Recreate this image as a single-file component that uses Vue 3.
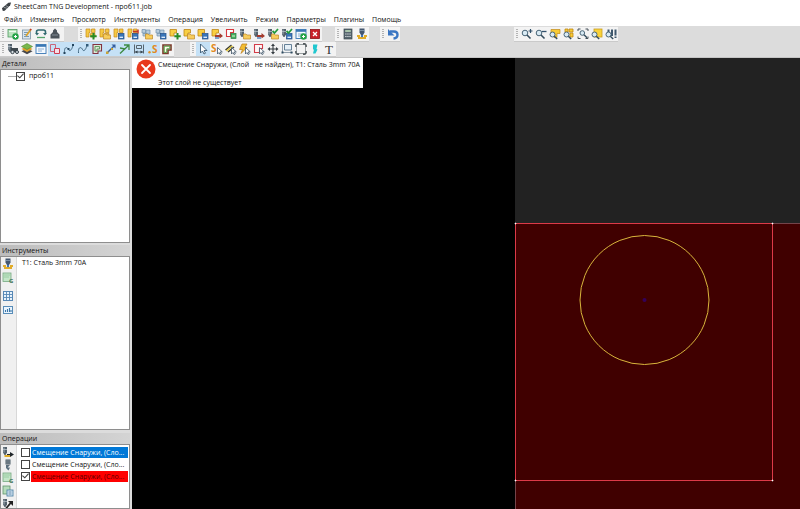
<script setup>
import { ref } from 'vue'

const menu = ['Файл', 'Изменить', 'Просмотр', 'Инструменты', 'Операция', 'Увеличить', 'Режим', 'Параметры', 'Плагины', 'Помощь']

const t = (label, ...parts) => ({ label, parts })
const on = (label, ...parts) => ({ label, parts, active: true })
const lettered = (tool, letter) => ({ ...tool, letter })

const startMark = { ch: 'S', x: 6, y: 11, cls: 's-letter' }
const startEdit = { ch: 'S', x: 1, y: 10, cls: 's-letter' }
const textMark = { ch: 'T', x: 3, y: 12, cls: 't-letter' }
const codeMark = { ch: 'G', x: 8, y: 12, cls: 'g-letter' }

const topBars = [
  { id: 'file', tools: [
    t('Новая работа', 'sheet-green', 'b-go'), t('Параметры работы', 'sheet-edit'),
    t('Загрузить', 'arch'), t('Постпроцессор', 'post')] },
  { id: 'nesting', tools: [
    t('Новая деталь', 'nest', 'b-plus'), t('Открыть деталь', 'nest', 'b-folder'),
    t('Сохранить деталь', 'nest', 'b-save'), t('Сохранить как', 'nest', 'b-save', 'b-red'),
    t('Открыть чертёж', 'nest-pale', 'b-folder'), t('Сохранить чертёж', 'nest-pale', 'b-save'),
    t('Добавить', 'block', 'b-plus'), t('Открыть', 'block', 'b-folder'),
    t('Сохранить', 'block', 'b-save'), t('Импорт', 'block', 'b-arrow'),
    t('Контур', 'outline-red', 'b-green'), t('Открыть инструменты', 'torch', 'b-folder'),
    t('Сохранить инструменты', 'torch', 'b-arrow'), t('Проверить инструменты', 'torch', 'b-folder', 'tick'),
    t('Применить', 'torch', 'b-save', 'tick'), t('Окно', 'window', 'b-go'), t('Закрыть', 'close')] },
  { id: 'calc', tools: [t('Калькулятор', 'calc'), t('Резак', 'torch-base')] },
  { id: 'undo', tools: [t('Отменить', 'undo')] },
  { id: 'zoom', tools: [
    t('Приблизить', 'lens', 'z-plus'), t('Отдалить', 'lens', 'z-minus'),
    t('Показать деталь', 'z-part', 'lens-low'), t('Показать все', 'z-grid', 'lens-low'),
    t('Показать область', 'z-frame', 'lens-mid'), t('Показать лист', 'z-sheet', 'lens-low'),
    t('Показать станок', 'z-torch', 'lens-low')] }
]

const lowBars = [
  { id: 'view', tools: [
    t('Показать инструмент', 'torch', 'binoc'), t('Слои', 'layers'), t('Окно', 'window'),
    on('Контуры', 'outlines'), on('Траектория', 'path', 'path-dots'), on('Сегменты', 'path', 'path-end'),
    on('Деталь', 'part-cut'), on('Начало', 'arrow-blue'), on('Направление', 'arrow-green'),
    on('Ширина', 'dims'), lettered(on('Старт', 'dot'), startMark), t('Заливка', 'thick')] },
  { id: 'edit', tools: [
    on('Выбор', 'cursor'), lettered(t('Начальная точка', 'cursor-low'), startEdit), t('Перемычки', 'hatch', 'cursor-low'),
    t('Быстрый выбор', 'bolt', 'cursor-low'), t('Контур', 'outline-big', 'cursor-low'), t('Переместить', 'move'),
    t('Масштаб', 'scale'), t('Поворот', 'rotate'), t('Резка', 'cyan'), lettered(t('Текст'), textMark)] }
]

const instrTools = [t('Резак', 'torch-base'), lettered(t('Новый инструмент', 'sheet'), codeMark), t('Таблица', 'table'), t('Свойства', 'card')]
const opTools = [t('Плазма', 'torch', 'b-go-yellow'), t('Сверление', 'drill'), lettered(t('Новая операция', 'sheet'), codeMark), t('Код', 'sheet-copy'), t('Переместить', 'torch', 'arrow-up')]

const partShown = ref(true)
const operations = ref([
  { name: 'Смещение Снаружи, (Сло...', checked: false, kind: 'selected' },
  { name: 'Смещение Снаружи, (Сло...', checked: false, kind: 'plain' },
  { name: 'Смещение Снаружи, (Сло...', checked: true, kind: 'error' }
])
</script>

<template>
  <div class="app">
    <svg class="defs" aria-hidden="true">
      <symbol id="sheet-green" viewBox="0 0 14 14"><rect x="2" y="2.500" width="9" height="7.500" fill="#b9e3bd" stroke="#4f9a62" stroke-width=".8"/><path d="M3 4.500h7" stroke="#eefaf0"/></symbol>
      <symbol id="b-go" viewBox="0 0 14 14"><circle cx="9.500" cy="9.500" r="3.200" fill="#24a347"/><path d="M8 9.500h3M9.500 8v3" stroke="#fff" stroke-width="1"/></symbol>
      <symbol id="sheet-edit" viewBox="0 0 14 14"><rect x="2.500" y="3" width="8" height="9" fill="#d7e4ee" stroke="#7d95a6" stroke-width=".8"/><path d="M4 5.500h4M4 7.500h3M4 9.500h5" stroke="#4f7898" stroke-width=".7"/><path d="M6 9l4.500-6" stroke="#dda32b" stroke-width="1.700"/><path d="M10.200 3.300l1-1.300" stroke="#be3b25" stroke-width="1.800"/></symbol>
      <symbol id="arch" viewBox="0 0 14 14"><path d="M2.500 6V5q0-2 2-2h5q2 0 2 2v1" fill="none" stroke="#326a70" stroke-width="1.600"/><path d="M1 6h4L3 8.500zM9 6h4l-2 2.500z" fill="#326a70"/><path d="M3 10.500h8" stroke="#55a46b" stroke-width="1.300"/></symbol>
      <symbol id="post" viewBox="0 0 14 14"><path d="M5 3.500L7 1.500l2 2V5l2.500 2.500v4h-9v-4L5 5z" fill="#4b535a"/><path d="M4 8h6" stroke="#8f9aa3" stroke-width=".8"/></symbol>
      <symbol id="nest" viewBox="0 0 14 14"><path d="M2 2h4v3.500H5V10H2zM7.500 2H11v3.500H7.500zM6.500 6.500H11V10H6.500z" fill="#f6c944" stroke="#c48a1c" stroke-width=".7"/></symbol>
      <symbol id="nest-pale" viewBox="0 0 14 14"><path d="M2 2.500h3.500V6H2zM6 3h4v4H6zM3 6.500h4v2.500H3z" fill="#b7ccde" stroke="#7091ad" stroke-width=".7"/></symbol>
      <symbol id="block" viewBox="0 0 14 14"><path d="M2 2.500h6.500v3.500H6v3H2z" fill="#f8cf43" stroke="#bc8516" stroke-width=".8"/></symbol>
      <symbol id="b-plus" viewBox="0 0 14 14"><path d="M9.500 6v6.500M6.300 9.200h6.400" stroke="#278b24" stroke-width="2"/></symbol>
      <symbol id="b-folder" viewBox="0 0 14 14"><path d="M5.500 7H8l1 1h3.500v4h-7z" fill="#f7cd5d" stroke="#bd8629" stroke-width=".7"/></symbol>
      <symbol id="b-save" viewBox="0 0 14 14"><rect x="6.500" y="6.500" width="5.500" height="5.500" fill="#3975b9" stroke="#24518b" stroke-width=".7"/><path d="M7.500 10.300h3.500" stroke="#e6f2ff" stroke-width="1.300"/></symbol>
      <symbol id="b-red" viewBox="0 0 14 14"><path d="M7 4.500h5M12 2.500v4" stroke="#c43723" stroke-width="1.500"/></symbol>
      <symbol id="b-arrow" viewBox="0 0 14 14"><path d="M5 8h4.500V6l3.500 3-3.500 2.500V10H5z" fill="#a33b2e"/><path d="M5 11h4" stroke="#3975b9" stroke-width="1.300"/></symbol>
      <symbol id="outline-red" viewBox="0 0 14 14"><path d="M2.500 2.500h7v3h-3v4h-4z" fill="#fff" stroke="#d63a3f" stroke-width="1.100"/></symbol>
      <symbol id="b-green" viewBox="0 0 14 14"><rect x="7" y="6.500" width="5" height="5" fill="#49af60" stroke="#257e43" stroke-width=".7"/><path d="M8 9h3" stroke="#d6f5cf"/></symbol>
      <symbol id="torch" viewBox="0 0 14 14"><path d="M2 2h4v5.500L4.500 10h-1L2 7.500z" fill="#53616c"/><path d="M3 2.500v5M2 4.500h4" stroke="#b6c1c9" stroke-width=".8"/></symbol>
      <symbol id="tick" viewBox="0 0 14 14"><path d="M6.500 4l2 2L12 2" fill="none" stroke="#259a3d" stroke-width="1.800"/></symbol>
      <symbol id="window" viewBox="0 0 14 14"><rect x="2" y="2.500" width="10" height="9" fill="#f3f9ff" stroke="#3977b4" stroke-width=".9"/><path d="M2 3.800h10" stroke="#3977b4" stroke-width="2"/><path d="M4 7h6M4 9h4" stroke="#719dc5" stroke-width=".8"/></symbol>
      <symbol id="close" viewBox="0 0 14 14"><rect x="2.500" y="2.500" width="9" height="9" fill="#c91f28" stroke="#8c1218" stroke-width=".8"/><path d="M5 5l4 4M9 5L5 9" stroke="#fff" stroke-width="1.300"/></symbol>
      <symbol id="calc" viewBox="0 0 14 14"><rect x="3" y="2" width="8" height="10" fill="#586770" stroke="#3c4a52" stroke-width=".7"/><path d="M4.200 4h5.600" stroke="#b9d6b7" stroke-width="1.700"/><path d="M4.200 7h5.600M4.200 9.500h5.600" stroke="#d9dfe3" stroke-width="1.100" stroke-dasharray="1.300 .8"/></symbol>
      <symbol id="torch-base" viewBox="0 0 14 14"><path d="M4.500 1.500h5v4L8 8H6L4.500 5.500z" fill="#43566f"/><path d="M4.500 3.500h5" stroke="#95a9be" stroke-width=".7"/><path d="M2 9h3M9 9h3M3 11h8" stroke="#e1ac29" stroke-width="1.800"/><circle cx="7" cy="9" r="1.200" fill="#3b72b8"/></symbol>
      <symbol id="undo" viewBox="0 0 14 14"><path d="M4 4.500h4q3.500 0 3.500 3.300T7.500 11.500" fill="none" stroke="#3a76c3" stroke-width="2.400"/><path d="M2 2v6.500h6.500z" fill="#3a76c3"/></symbol>
      <symbol id="lens" viewBox="0 0 14 14"><circle cx="5" cy="6" r="2.800" fill="#d8eaf4" stroke="#4a6678"/><path d="M7 8l3.500 3.500" stroke="#344d5e" stroke-width="1.600"/></symbol>
      <symbol id="lens-low" viewBox="0 0 14 14"><circle cx="4.500" cy="7.500" r="2.500" fill="#d8eaf4" stroke="#4a6678"/><path d="M6.300 9.300l2.900 2.700" stroke="#344d5e" stroke-width="1.500"/></symbol>
      <symbol id="lens-mid" viewBox="0 0 14 14"><circle cx="6.300" cy="6" r="2.300" fill="#d8eaf4" stroke="#4a6678"/><path d="M8 7.700l3 3" stroke="#344d5e" stroke-width="1.400"/></symbol>
      <symbol id="z-plus" viewBox="0 0 14 14"><path d="M10.500 2v4M8.500 4h4" stroke="#31516c" stroke-width="1.200"/></symbol>
      <symbol id="z-minus" viewBox="0 0 14 14"><path d="M8 4.500h4.500" stroke="#31516c" stroke-width="1.300"/></symbol>
      <symbol id="z-part" viewBox="0 0 14 14"><path d="M3 2.500h9v4H9v4H6V6H3z" fill="#f8cb35" stroke="#c18a18" stroke-width=".7"/></symbol>
      <symbol id="z-grid" viewBox="0 0 14 14"><path d="M3 2h3v3H3zM7 2h4v3H7zM8 6h3v4H8z" fill="#f8cb35" stroke="#bd8513" stroke-width=".8"/></symbol>
      <symbol id="z-frame" viewBox="0 0 14 14"><path d="M2 4V2h2.500M9.500 2H12v2M12 9.500v2H9.500M4.500 11.500H2v-2" fill="none" stroke="#465159"/></symbol>
      <symbol id="z-sheet" viewBox="0 0 14 14"><rect x="4" y="2" width="8" height="8" fill="#f9d239" stroke="#c79d22" stroke-width=".8"/></symbol>
      <symbol id="z-torch" viewBox="0 0 14 14"><path d="M3.500 2.500h2v4h-2zM7 2.500h2V9H7zM10.500 2.500h2v6h-2zM10.500 9.500h2V11h-2z" fill="#3e576c"/></symbol>
      <symbol id="binoc" viewBox="0 0 14 14"><path d="M5 6h7v4H5z" fill="#3f484e"/><circle cx="6.500" cy="10" r="1.700" fill="#d6dee2" stroke="#333f47"/><circle cx="11" cy="10" r="1.500" fill="#d6dee2" stroke="#333f47"/></symbol>
      <symbol id="layers" viewBox="0 0 14 14"><path d="M1.500 9.300L7 6.500l5.500 2.800L7 12.300z" fill="#46474b"/><path d="M1.500 6.900L7 4l5.500 2.900L7 9.900z" fill="#e1a12d"/><path d="M1.500 4.500L7 1.500l5.500 3L7 7.500z" fill="#79b84b" stroke="#4c8a31" stroke-width=".6"/></symbol>
      <symbol id="outlines" viewBox="0 0 14 14"><path d="M2.500 2.500h5v7h-5z" fill="none" stroke="#c9667b"/><path d="M6.500 6.500h5v5h-5z" fill="#f6dfe7" stroke="#cf3d51"/></symbol>
      <symbol id="path" viewBox="0 0 14 14"><path d="M2.500 11c-.5-7 3-6 4-3.500S10 8 11 3" fill="none" stroke="#40667f" stroke-width="1"/></symbol>
      <symbol id="path-dots" viewBox="0 0 14 14"><path d="M1.500 10h2v2h-2zM5.500 6h2v2h-2zM10 2h2v2h-2z" fill="#24445c"/></symbol>
      <symbol id="path-end" viewBox="0 0 14 14"><path d="M10 2h2.500v2.500H10z" fill="#315a78"/></symbol>
      <symbol id="part-cut" viewBox="0 0 14 14"><path d="M3 2.500h8.500V9H8v2.500H3z" fill="#dce8d5" stroke="#833341" stroke-width="1.100"/><path d="M5 4.500h4.500v2.500H7v2H5z" fill="none" stroke="#569256" stroke-width=".9"/></symbol>
      <symbol id="arrow-blue" viewBox="0 0 14 14"><path d="M3 11l7-7" stroke="#355e9d" stroke-width="1.500"/><path d="M7.500 2.500h4v4z" fill="#355e9d"/><path d="M2 9.500h2.500V12H2zM7 6h2v2H7z" fill="#c8a438"/></symbol>
      <symbol id="arrow-green" viewBox="0 0 14 14"><path d="M2 11.500L11 3M6 3h5v5M2 6l5 1" fill="none" stroke="#3d8a42" stroke-width="1.300"/></symbol>
      <symbol id="dims" viewBox="0 0 14 14"><path d="M2.500 2.500v9M11.500 2.500v9M3 10h8M4.500 3.500h5v3h-5z" fill="none" stroke="#56646e" stroke-width="1"/><path d="M5.500 8.500L3 10l2.500 1.500M8.500 8.500L11 10l-2.500 1.500" fill="#33424b"/></symbol>
      <symbol id="dot" viewBox="0 0 14 14"><circle cx="3.500" cy="10.200" r="1.200" fill="#df9125"/></symbol>
      <symbol id="thick" viewBox="0 0 14 14"><path d="M3 3h8v5H8v3.500H3z" fill="none" stroke="#7a3a2a" stroke-width="1.600"/><path d="M4.200 4.200h5.600v2.600H6.800v3.600H4.200z" fill="#fffbe8" stroke="#4c9b3c" stroke-width="1"/></symbol>
      <symbol id="cursor" viewBox="0 0 14 14"><path d="M4.500 2v9l2-2L8 12l1.500-.8L8 8.500h3z" fill="#fff" stroke="#3a5872" stroke-width=".9"/></symbol>
      <symbol id="cursor-low" viewBox="0 0 14 14"><path d="M7.500 5.500V12L9 10.500l1 2 1.300-.6-1-2h2z" fill="#fff" stroke="#3e5367" stroke-width=".8"/></symbol>
      <symbol id="hatch" viewBox="0 0 14 14"><path d="M1.500 8l6-5M4 10l6-5" stroke="#403e2f" stroke-width="1.500"/><path d="M2.500 9l6-5" stroke="#e6c92f" stroke-width="1.300"/></symbol>
      <symbol id="bolt" viewBox="0 0 14 14"><path d="M4 2h5L7 5.500h2l-6 6 1.500-4h-3z" fill="#f3bd31" stroke="#ba7b17" stroke-width=".7"/></symbol>
      <symbol id="outline-big" viewBox="0 0 14 14"><path d="M2.500 2.500h8v4h-3v4h-5z" fill="#fff6f6" stroke="#d33c49" stroke-width="1.100"/></symbol>
      <symbol id="move" viewBox="0 0 14 14"><path d="M7 3v8M3 7h8" stroke="#353c41" stroke-width="1.100"/><path d="M7 1.500L9 4H5zM7 12.500L5 10h4zM1.500 7L4 5v4zM12.500 7L10 9V5z" fill="#353c41"/></symbol>
      <symbol id="scale" viewBox="0 0 14 14"><path d="M4.500 2.500h7V8h-7z" fill="#e6f0f7" stroke="#57758d" stroke-width=".9"/><path d="M2.500 2v8.500h10" fill="none" stroke="#728596" stroke-width=".8"/><path d="M1.500 9.500h2v2h-2zM10.500 9.500h2v2h-2z" fill="#314c60"/></symbol>
      <symbol id="rotate" viewBox="0 0 14 14"><path d="M2 5V3l1-1h2M9 2h2l1 1v2M12 9v2l-1 1H9M5 12H3l-1-1V9" fill="none" stroke="#20272b" stroke-width="1.300"/><rect x="2.500" y="2.500" width="9" height="9" fill="none" stroke="#70797d" stroke-width=".7"/></symbol>
      <symbol id="cyan" viewBox="0 0 14 14"><path d="M5 2.500h4.500L8.500 7l1 .5-2 4H5l1-4H5z" fill="#20c7cf"/></symbol>
      <symbol id="sheet" viewBox="0 0 14 14"><rect x="2" y="2" width="8" height="8.500" fill="#c3e6c8" stroke="#76a880" stroke-width=".8"/><path d="M3 4h6M3 6h5" stroke="#91c59b" stroke-width=".8"/></symbol>
      <symbol id="sheet-copy" viewBox="0 0 14 14"><rect x="2" y="2" width="7" height="8" fill="#b5dcba" stroke="#63956e" stroke-width=".8"/><rect x="6" y="6" width="6" height="6" fill="#d4e7f6" stroke="#5585a7" stroke-width=".9"/><path d="M7.500 8h3M7.500 10h3" stroke="#4c7595" stroke-width=".8"/></symbol>
      <symbol id="table" viewBox="0 0 14 14"><rect x="2.500" y="2.500" width="9" height="9" fill="#e8f3fc" stroke="#5788b5"/><path d="M2 5.500h10M2 8.500h10M5.500 2v10M8.500 2v10" stroke="#5788b5" stroke-width=".9"/></symbol>
      <symbol id="card" viewBox="0 0 14 14"><rect x="2.500" y="3.500" width="9" height="7" fill="#eaf5ff" stroke="#598db8"/><path d="M4.500 9V7M6.500 9V6M8.500 9V5M10 9V7" stroke="#3c77a7" stroke-width="1.100"/></symbol>
      <symbol id="drill" viewBox="0 0 14 14"><path d="M4.500 1.500h5v5h-5z" fill="#47555f"/><path d="M4.500 3h5M4.500 5h5" stroke="#a9b8c2" stroke-width=".7"/><path d="M5 7h4L6.500 9.500H9L7.500 12.500 5 10z" fill="#596d7b"/></symbol>
      <symbol id="b-go-yellow" viewBox="0 0 14 14"><path d="M3.500 11h6" stroke="#dfac27" stroke-width="2"/><path d="M6 9.500h4" stroke="#1f2529"/><path d="M9 7l4 2.500L9 12z" fill="#1f2529"/></symbol>
      <symbol id="arrow-up" viewBox="0 0 14 14"><path d="M5 11.500l5-6" stroke="#222" stroke-width="1.800"/><path d="M7 4h5v5z" fill="#222"/></symbol>
    </svg>

    <header class="title-bar">
      <svg class="app-icon" viewBox="0 0 12 12" aria-hidden="true"><path d="M1 8l7-6 3-.5-1 3-6 6-2 .5z" fill="#3d4246"/><path d="M3 7l4 1M5 5l3 1.500" stroke="#aeb4b8" stroke-width=".8"/></svg>
      <h1>SheetCam TNG Development - проб11.job</h1>
    </header>

    <nav class="menu">
      <button v-for="m in menu" :key="m" type="button">{{ m }}</button>
    </nav>

    <div class="bars">
      <div v-for="(row, r) in [topBars, lowBars]" :key="r" class="bar-row">
        <div v-for="bar in row" :key="bar.id" class="toolbar" :class="bar.id" role="toolbar">
          <span class="grip"></span>
          <button v-for="(tool, i) in bar.tools" :key="i" type="button" class="tool" :class="{ active: tool.active }" :aria-label="tool.label">
            <svg viewBox="0 0 14 14">
              <use v-for="p in tool.parts" :key="p" :href="'#' + p" width="14" height="14" />
              <text v-if="tool.letter" :x="tool.letter.x" :y="tool.letter.y" :class="tool.letter.cls">{{ tool.letter.ch }}</text>
            </svg>
          </button>
        </div>
      </div>
    </div>

    <main class="work">
      <aside class="side">
        <section class="panel details">
          <h2>Детали</h2>
          <div class="body tree">
            <span class="branch"></span>
            <label><input v-model="partShown" type="checkbox"><span>проб11</span></label>
          </div>
        </section>
        <section class="panel instruments">
          <h2>Инструменты</h2>
          <div class="body">
            <div class="rail">
              <button v-for="(tool, i) in instrTools" :key="i" type="button" class="tool" :aria-label="tool.label">
                <svg viewBox="0 0 14 14">
                  <use v-for="p in tool.parts" :key="p" :href="'#' + p" width="14" height="14" />
                  <text v-if="tool.letter" :x="tool.letter.x" :y="tool.letter.y" :class="tool.letter.cls">{{ tool.letter.ch }}</text>
                </svg>
              </button>
            </div>
            <ul class="tool-list"><li>T1: Сталь 3mm 70A</li></ul>
          </div>
        </section>
        <section class="panel operations">
          <h2>Операции</h2>
          <div class="body">
            <div class="rail">
              <button v-for="(tool, i) in opTools" :key="i" type="button" class="tool" :aria-label="tool.label">
                <svg viewBox="0 0 14 14">
                  <use v-for="p in tool.parts" :key="p" :href="'#' + p" width="14" height="14" />
                  <text v-if="tool.letter" :x="tool.letter.x" :y="tool.letter.y" :class="tool.letter.cls">{{ tool.letter.ch }}</text>
                </svg>
              </button>
            </div>
            <ul class="op-list">
              <li v-for="(op, i) in operations" :key="i">
                <label><input v-model="op.checked" type="checkbox"><span :class="op.kind">{{ op.name }}</span></label>
              </li>
            </ul>
          </div>
        </section>
      </aside>

      <section class="canvas">
        <svg class="drawing" role="img" aria-label="Чертёж">
          <rect x="383" y="0" width="100%" height="165" fill="#222" />
          <rect x="383" y="165" width="100%" height="100%" fill="#400000" />
          <path d="M383.500 165V2000M383 165.500H3000" stroke="#74444a" fill="none" />
          <rect x="383.500" y="165.500" width="257" height="257" fill="none" stroke="#dc3a48" />
          <circle cx="512.500" cy="242" r="64.500" fill="none" stroke="#d8b53c" />
          <circle cx="512.500" cy="242" r="2" fill="#340058" />
          <path d="M383 165h1v1h-1zM640 165h1v1h-1zM383 422h1v1h-1zM640 422h1v1h-1z" fill="#fff" stroke="#fff" stroke-width=".6" />
        </svg>
        <div class="alert" role="alert">
          <svg viewBox="0 0 20 20" aria-hidden="true"><circle cx="10" cy="10" r="9.500" fill="#e8381b" /><path d="M6 6l8 8M14 6l-8 8" stroke="#fff" stroke-width="1.800" stroke-linecap="round" /></svg>
          <div>
            <p>Смещение Снаружи, (Слой&nbsp;&nbsp; не найден), T1: Сталь 3mm 70A</p>
            <p>Этот слой не существует</p>
          </div>
        </div>
      </section>
    </main>
  </div>
</template>

<style>
html, body { background: #dcdcdc; }
</style>

<style scoped>
.app {
  display: flex;
  flex-direction: column;
  height: 100vh;
  overflow: hidden;
  background: #dcdcdc;
  color: #111;
  font: 7px/12px "Open Sans", "Noto Sans", sans-serif;
}
.defs { position: absolute; width: 0; height: 0; }
h1, h2, p, ul { margin: 0; padding: 0; font: inherit; list-style: none; }
button { border: 0; padding: 0; background: none; color: inherit; font: inherit; }
.title-bar { display: flex; align-items: center; gap: 2px; height: 13px; padding-left: 1px; background: #fff; }
.app-icon { width: 11px; height: 11px; }
.menu { display: flex; gap: 8px; height: 13px; padding: 0 4px; background: #fff; }
.menu button { white-space: nowrap; }
.bars { height: 32px; flex: none; padding-top: 1px; border-bottom: 1px solid #c4c4c4; box-sizing: border-box; }
.bar-row { display: flex; height: 15px; }
.toolbar { display: flex; align-items: center; height: 15px; background: #f3f3f3; border-bottom: 1px solid #cacaca; box-sizing: border-box; }
.file { padding-right: 2px; }
.nesting { margin-left: 14px; }
.calc { margin-left: 13px; }
.undo { margin-left: 11px; }
.zoom { margin-left: 114px; }
.edit { margin-left: 16px; }
.grip { width: 2px; height: 10px; margin: 0 2px; background: repeating-linear-gradient(#b4b4b4 0 1px, #f3f3f3 1px 2px); }
.tool { width: 14px; height: 14px; flex: none; }
.tool svg { display: block; width: 14px; height: 14px; }
.tool.active { background: #c5e1f6; }
.s-letter { font: bold 10px "Open Sans", sans-serif; fill: #e28a20; }
.t-letter { font: 13px "Liberation Serif", serif; fill: #333; }
.g-letter { font: bold 6px "Open Sans", sans-serif; fill: #44735a; }
.work { display: flex; flex: 1; min-height: 0; }
.side { display: flex; flex-direction: column; width: 132px; flex: none; }
.panel { display: flex; flex-direction: column; min-height: 0; margin-right: 2px; }
.panel h2 { height: 11px; flex: none; padding-left: 2px; line-height: 11px; background: linear-gradient(90deg, #bcbcbc, #d4d4d4); }
.panel .body { display: flex; flex: 1; min-height: 0; overflow: hidden; background: #fff; border: 1px solid #8e8e8e; }
.details { flex: 185; margin-bottom: 2px; }
.instruments { flex: 185; margin-bottom: 3px; }
.operations { flex: 76; }
.tree { padding: 0 0 0 7px; }
.branch { width: 8px; height: 1px; margin-top: 6px; background: #aaa; }
label { display: flex; align-items: center; height: 12px; }
input { appearance: none; display: grid; width: 9px; height: 9px; margin: 0; border: 1px solid #444; background: #fff; flex: none; }
input:checked::before { content: ""; width: 7px; height: 7px; background: #444; clip-path: polygon(0 50%, 10% 40%, 40% 66%, 88% 12%, 100% 22%, 40% 86%); }
.tree label span { padding: 0 4px; }
.rail { display: flex; flex-direction: column; width: 15px; background: #f0f0f0; border-right: 1px solid #d8d8d8; flex: none; overflow: hidden; }
.operations .rail .tool { height: 13px; }
.instruments .rail .tool:nth-child(3) { margin-top: 4px; }
.tool-list { padding: 0 5px; }
.op-list { flex: 1; min-width: 0; padding: 1px 1px 0 4px; }
.op-list label span { flex: 1; min-width: 0; height: 11px; line-height: 11px; margin-left: 1px; padding-left: 1px; white-space: nowrap; }
.selected { background: #0078d7; color: #fff; }
.error { background: #f00; color: #5a0000; }
.canvas { position: relative; flex: 1; min-width: 0; background: #000; overflow: hidden; }
.drawing { display: block; width: 100%; height: 100%; }
.alert { position: absolute; top: 0; left: 0; display: flex; gap: 2px; padding: 1px 3px 0 4px; background: #fff; white-space: nowrap; }
.alert svg { width: 20px; height: 20px; }
.alert p { line-height: 11px; }
.alert p + p { margin-top: 7px; }
</style>
